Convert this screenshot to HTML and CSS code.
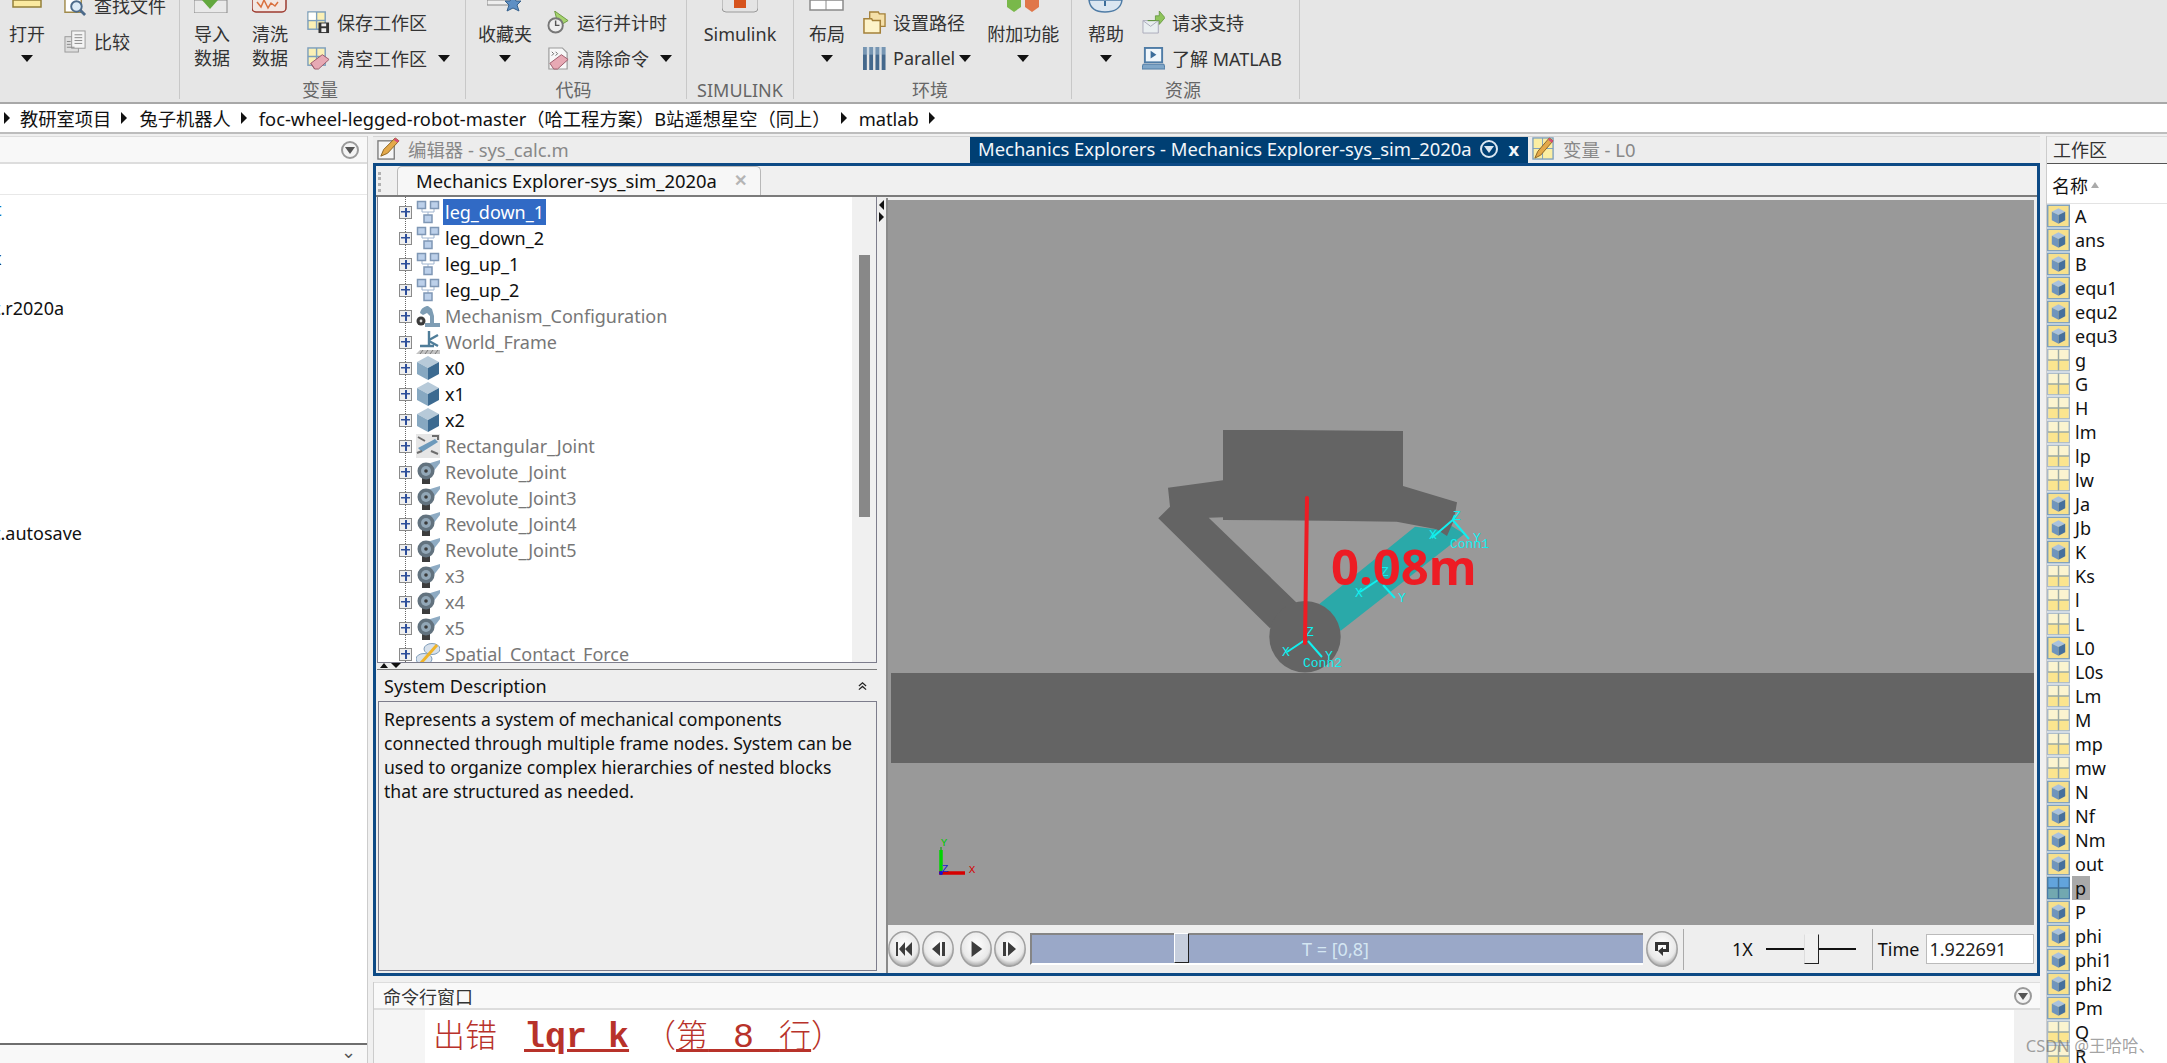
FILE: index.html
```html
<!DOCTYPE html>
<html lang="zh">
<head>
<meta charset="utf-8">
<title>MATLAB Mechanics Explorer</title>
<link rel="stylesheet" href="styles.css">
</head>
<body>
<svg class="defs" width="0" height="0">
  <defs>
    <symbol id="i-nodes" viewBox="0 0 24 24">
      <path d="M6 8v4h12V8M12 12v4" fill="none" stroke="#9fb4cf" stroke-width="1"/>
      <rect x="1.500" y="1.500" width="8" height="7" fill="#bcd0ea" stroke="#7f97b5" stroke-width="1.500"/>
      <rect x="14.500" y="1.500" width="8" height="7" fill="#bcd0ea" stroke="#7f97b5" stroke-width="1.500"/>
      <rect x="8" y="15" width="8" height="7.500" fill="#bcd0ea" stroke="#7f97b5" stroke-width="1.500"/>
    </symbol>
    <symbol id="i-robot" viewBox="0 0 24 24">
      <path d="M4 9c1-5 5-7 8-7l4 3 2 7v7h6v4H9v-4h5v-7l-3-3-4 2z" fill="#7e9db4"/>
      <circle cx="5" cy="17" r="4.500" fill="#3b3b3b"/><circle cx="5" cy="17" r="1.400" fill="#ddd"/>
    </symbol>
    <symbol id="i-world" viewBox="0 0 24 24">
      <path d="M13 1v14M13 10l9-5M13 11l9 5M4 16h14" fill="none" stroke="#4f7d99" stroke-width="2.400"/>
      <path d="M0 24l4-4h20v4z" fill="#c3c3c3"/>
      <path d="M4 24l3-4M9 24l3-4M14 24l3-4M19 24l3-4" stroke="#777" stroke-width="1"/>
    </symbol>
    <symbol id="i-cube" viewBox="0 0 24 24">
      <path d="M12 0l11 6-11 6L1 6z" fill="#b7cad9"/>
      <path d="M1 6l11 6v12L1 18z" fill="#87a8c1"/>
      <path d="M23 6v12l-11 6V12z" fill="#3c6a90"/>
    </symbol>
    <symbol id="i-rect" viewBox="0 0 24 24">
      <rect y="0" width="24" height="24" fill="#e6e6e6"/>
      <path d="M2 14L19 5l3 3L6 18z" fill="#6d9abb"/>
      <path d="M2 3l7 4M22 20l-7-3M1 19l5-2M16 2h6v4" fill="none" stroke="#6d6d6d" stroke-width="2"/>
    </symbol>
    <symbol id="i-rev" viewBox="0 0 24 24">
      <path d="M11 4L24 0v3l-7 9z" fill="#8eabc3"/>
      <path d="M6 17h8v7H6z" fill="#3d3d3d"/>
      <circle cx="10" cy="11" r="8.500" fill="#62727e"/>
      <circle cx="10" cy="11" r="5" fill="#92a7b7"/>
      <circle cx="10" cy="11" r="1.800" fill="#3a3a3a"/>
    </symbol>
    <symbol id="i-force" viewBox="0 0 24 24">
      <ellipse cx="16" cy="7" rx="8" ry="5.500" fill="#d7e1ec" stroke="#7f9cb8"/>
      <ellipse cx="8" cy="17" rx="8" ry="5.500" fill="#d7e1ec" stroke="#7f9cb8"/>
      <path d="M5 21L21 3" stroke="#f0b429" stroke-width="3"/>
    </symbol>
    <symbol id="i-wcube" viewBox="0 0 24 24">
      <rect x=".75" y=".75" width="22.500" height="22.500" fill="#f6e08c" stroke="#7d9fbd" stroke-width="1.500"/>
      <path d="M12 4l7 3.500-7 3.500-7-3.500z" fill="#a9c2de"/>
      <path d="M5 7.500l7 3.500v9l-7-3.500z" fill="#6f95bd"/>
      <path d="M19 7.500v9l-7 3.500v-9z" fill="#46709c"/>
    </symbol>
    <symbol id="i-wgrid" viewBox="0 0 24 24">
      <rect x=".75" y=".75" width="22.500" height="22.500" fill="#fbf4d0" stroke="#a9b9c9" stroke-width="1.500"/>
      <rect x="1.500" y="12" width="21" height="10.500" fill="#fbe58f"/>
      <path d="M12 1v22M1 12h22" stroke="#9aa9a4" stroke-width="1.500"/>
    </symbol>
    <symbol id="i-wgridsel" viewBox="0 0 24 24">
      <rect x=".75" y=".75" width="22.500" height="22.500" fill="#62a4dc" stroke="#4b7da6" stroke-width="1.500"/>
      <rect x="1.500" y="12" width="21" height="10.500" fill="#72a8b0"/>
      <path d="M12 1v22M1 12h22" stroke="#3e6e94" stroke-width="1.500"/>
    </symbol>
    <symbol id="i-save" viewBox="0 0 24 24">
      <rect x="1" y="1" width="18" height="18" fill="#fbf0b5" stroke="#7d9fbd" stroke-width="1.500"/>
      <path d="M10 1v18M1 10h18" stroke="#7d9fbd" stroke-width="1.500"/>
      <rect x="1.700" y="1.700" width="7.500" height="7.500" fill="#fff"/>
      <rect x="12" y="12" width="11" height="11" fill="#333"/><rect x="15" y="13" width="5" height="3" fill="#eee"/><rect x="15" y="18" width="5" height="4" fill="#eee"/>
    </symbol>
    <symbol id="i-clear" viewBox="0 0 24 24">
      <rect x="1" y="1" width="18" height="18" fill="#fbf0b5" stroke="#7d9fbd" stroke-width="1.500"/>
      <path d="M10 1v18M1 10h18" stroke="#7d9fbd" stroke-width="1.500"/>
      <path d="M4 17l12-9 7 5-11 10H8z" fill="#e7a9b4" stroke="#9b5a6a"/>
      <path d="M4 17l4 6" stroke="#9b5a6a"/>
    </symbol>
    <symbol id="i-find" viewBox="0 0 24 24">
      <path d="M1 4h17v15H1z" fill="#fff" stroke="#a08a4a" stroke-width="1.500"/>
      <circle cx="13" cy="13" r="5.500" fill="#dceaf6" stroke="#4c6a8a" stroke-width="2"/>
      <path d="M17 17l5 5" stroke="#4c6a8a" stroke-width="3"/>
    </symbol>
    <symbol id="i-compare" viewBox="0 0 24 24">
      <rect x="1" y="7" width="14" height="16" fill="#ddd" stroke="#999"/>
      <rect x="8" y="1" width="14" height="18" fill="#f4f4f4" stroke="#999"/>
      <path d="M11 5h8M11 8h8M11 11h8M11 14h8M3 12h4M3 15h4M3 18h8" stroke="#888"/>
    </symbol>
    <symbol id="i-run" viewBox="0 0 24 24">
      <path d="M8 0l14 10-10 6z" fill="#a6d36f" stroke="#6c9a40"/>
      <circle cx="9" cy="15" r="7.500" fill="#eee" stroke="#777" stroke-width="2"/>
      <path d="M9 10v5h4" stroke="#555" stroke-width="1.500" fill="none"/>
    </symbol>
    <symbol id="i-clrcmd" viewBox="0 0 24 24">
      <path d="M2 1h14l5 5v17H2z" fill="#f8f8f8" stroke="#999" stroke-width="1.200"/>
      <path d="M5 5l2 2-2 2M9 5l2 2-2 2" stroke="#666" fill="none"/>
      <path d="M3 17l12-9 7 5-11 10H7z" fill="#e7a9b4" stroke="#9b5a6a"/>
    </symbol>
    <symbol id="i-folder" viewBox="0 0 24 24">
      <path d="M7 1h9l1 2h6v13H7z" fill="#f4dfa8" stroke="#a4813a" stroke-width="1.400"/>
      <path d="M1 8h8l1 2h8v13H1z" fill="#fdf3ca" stroke="#a4813a" stroke-width="1.600"/>
    </symbol>
    <symbol id="i-par" viewBox="0 0 24 24">
      <g fill="#44688c"><rect x="0" width="4" height="24"/><rect x="6.500" width="4" height="24"/><rect x="13" width="4" height="24"/><rect x="19.500" width="4" height="24"/></g>
      <rect width="24" height="8" fill="#b4cde0" opacity=".45"/>
    </symbol>
    <symbol id="i-support" viewBox="0 0 24 24">
      <path d="M1 10h16v13H1z" fill="#e9eef0" stroke="#aab"/>
      <path d="M1 10l8 6 8-6" fill="none" stroke="#aab"/>
      <path d="M6 10h8V5h4V0l6 7-6 7V10H6z" fill="#8fc45b" stroke="#5e933a" stroke-width=".8"/>
    </symbol>
    <symbol id="i-learn" viewBox="0 0 24 24">
      <rect x="3" y="1" width="18" height="15" fill="#f0f6fb" stroke="#4f7ca6" stroke-width="2"/>
      <path d="M9 4l6 4-6 4z" fill="#3b6d9b"/>
      <path d="M1 18h22l1 5H0z" fill="#7fa6c8" stroke="#4f7ca6"/>
    </symbol>
    <symbol id="i-pen" viewBox="0 0 24 24">
      <rect x="1" y="4" width="17" height="19" fill="#f6f6f6" stroke="#7a7a7a" stroke-width="1.400"/>
      <path d="M4 20l3-7L19 1l4 3L11 17z" fill="#e4a94a" stroke="#8b6320"/>
      <path d="M19 1l4 3-1.500 2-4-3z" fill="#d64b7a"/>
    </symbol>
    <symbol id="i-varpen" viewBox="0 0 24 24">
      <rect x="1" y="1" width="21" height="22" fill="#fbeea3" stroke="#7d9fbd" stroke-width="1.400"/>
      <path d="M11 1v22M1 12h21" stroke="#7d9fbd"/>
      <path d="M3 22l3-7L18 1l4 3L9 19z" fill="#e4a94a" stroke="#8b6320"/>
      <path d="M18 1l4 3-1 2-4-3z" fill="#d64b7a"/>
    </symbol>
    <radialGradient id="g-btn" cx=".5" cy=".4" r=".62">
      <stop offset="0" stop-color="#fff"/><stop offset=".72" stop-color="#e9e9e9"/><stop offset="1" stop-color="#9b9b9b"/>
    </radialGradient>
    <symbol id="i-round" viewBox="0 0 32 36">
      <ellipse cx="16" cy="18" rx="15.200" ry="17.200" fill="url(#g-btn)" stroke="#a0a0a0" stroke-width="1.500"/>
    </symbol>
  </defs>
</svg>

<div class="app">
  <header class="ribbon">
    <section class="group g-file">
      <div class="group-body">
        <div class="big w54">
          <svg class="big-icon" viewBox="0 0 36 13"><path d="M4 0h28v7H4z" fill="#fbeaa0" stroke="#94803a" stroke-width="1.500"/></svg>
          <span class="big-text">打开</span><i class="caret"></i>
        </div>
        <div class="smalls up ml10">
          <div class="small"><svg class="ico"><use href="#i-find"/></svg><span>查找文件</span></div>
          <div class="small"><svg class="ico"><use href="#i-compare"/></svg><span>比较</span></div>
        </div>
      </div>
    </section>

    <section class="group g-var">
      <div class="group-body">
        <div class="big w58 ml3">
          <svg class="big-icon" viewBox="0 0 36 13"><path d="M0 0h33v13H0z" fill="#e9e9e9" stroke="#888"/><path d="M8 0h16l-8 9z" fill="#63a83f"/></svg>
          <span class="big-text">导入</span><span class="big-text">数据</span>
        </div>
        <div class="big w58">
          <svg class="big-icon" viewBox="0 0 36 13"><rect x="0" y="-8" width="34" height="20" rx="4" fill="#f2e7e3" stroke="#9d3b30" stroke-width="1.500"/><path d="M5 2l4 5 3-7 4 8 3-5 4 3 3-4" fill="none" stroke="#d9703f" stroke-width="1.500"/></svg>
          <span class="big-text">清洗</span><span class="big-text">数据</span>
        </div>
        <div class="smalls ml8">
          <div class="small"><svg class="ico"><use href="#i-save"/></svg><span>保存工作区</span></div>
          <div class="small"><svg class="ico"><use href="#i-clear"/></svg><span>清空工作区</span><i class="caret side"></i></div>
        </div>
      </div>
      <div class="group-label">变量</div>
    </section>

    <section class="group g-code">
      <div class="group-body">
        <div class="big w60 ml9">
          <svg class="big-icon" viewBox="0 0 36 13"><path d="M0 0h26v5H0z" fill="#eee" stroke="#888"/><path d="M26 -4l3 5h5l-4 4 2 6-6-3-6 3 2-6-4-4h5z" fill="#5d8fc4" stroke="#35608c"/></svg>
          <span class="big-text">收藏夹</span><i class="caret"></i>
        </div>
        <div class="smalls ml12">
          <div class="small"><svg class="ico"><use href="#i-run"/></svg><span>运行并计时</span></div>
          <div class="small"><svg class="ico"><use href="#i-clrcmd"/></svg><span>清除命令</span><i class="caret side"></i></div>
        </div>
      </div>
      <div class="group-label">代码</div>
    </section>

    <section class="group g-sim">
      <div class="group-body">
        <div class="big full">
          <svg class="big-icon" viewBox="0 0 36 13"><rect x="0" y="-10" width="36" height="22" rx="4" fill="#e4e4e4" stroke="#9a9a9a"/><rect x="12" y="-6" width="12" height="14" fill="#d6531d"/></svg>
          <span class="big-text">Simulink</span>
        </div>
      </div>
      <div class="group-label plain">SIMULINK</div>
    </section>

    <section class="group g-env">
      <div class="group-body">
        <div class="big w64">
          <svg class="big-icon" viewBox="0 0 36 13"><path d="M1 0h33v10H1z" fill="#fff" stroke="#8a8a8a" stroke-width="1.500"/><path d="M17 0v10" stroke="#8a8a8a"/></svg>
          <span class="big-text">布局</span><i class="caret"></i>
        </div>
        <div class="smalls ml3">
          <div class="small"><svg class="ico"><use href="#i-folder"/></svg><span>设置路径</span></div>
          <div class="small"><svg class="ico"><use href="#i-par"/></svg><span>Parallel</span><i class="caret tight"></i></div>
        </div>
        <div class="big w80 ml12">
          <svg class="big-icon" viewBox="0 0 36 13"><path d="M2 0h14v7l-7 5-7-5z" fill="#79b84a"/><path d="M20 0h14v7l-7 5-7-5z" fill="#e0774a"/></svg>
          <span class="big-text">附加功能</span><i class="caret"></i>
        </div>
      </div>
      <div class="group-label">环境</div>
    </section>

    <section class="group g-res">
      <div class="group-body">
        <div class="big w66">
          <svg class="big-icon" viewBox="0 0 36 13"><path d="M1 0c1 9 8 12 16 12s16-3 17-12z" fill="#dbe6f1" stroke="#4f7ca6" stroke-width="1.500"/><path d="M17 1v5" stroke="#3b6d9b" stroke-width="2"/></svg>
          <span class="big-text">帮助</span><i class="caret"></i>
        </div>
        <div class="smalls ml2">
          <div class="small"><svg class="ico"><use href="#i-support"/></svg><span>请求支持</span></div>
          <div class="small"><svg class="ico"><use href="#i-learn"/></svg><span>了解 MATLAB</span></div>
        </div>
      </div>
      <div class="group-label">资源</div>
    </section>
  </header>

  <nav class="crumbs">
    <i class="tri"></i><span>教研室项目</span><i class="tri"></i><span>兔子机器人</span><i class="tri"></i><span>foc-wheel-legged-robot-master（哈工程方案）B站遥想星空（同上）</span><i class="tri"></i><span>matlab</span><i class="tri"></i>
  </nav>

  <main class="main">
    <aside class="files">
      <div class="panel-head"><span class="menu-dot"></span></div>
      <div class="files-path"></div>
      <div class="files-list">
        <div class="file blue">t</div>
        <div class="file">x</div>
        <div class="file">t.r2020a</div>
        <div class="file">t.autosave</div>
      </div>
      <div class="files-foot"><span class="chev">⌄</span></div>
    </aside>

    <div class="center">
      <div class="doc-tabs">
        <div class="doc-tab first"><svg class="ico"><use href="#i-pen"/></svg><span>编辑器 - sys_calc.m</span></div>
        <div class="doc-tab active"><span>Mechanics Explorers - Mechanics Explorer-sys_sim_2020a</span><span class="menu-dot light"></span><span class="close">x</span></div>
        <div class="doc-tab"><svg class="ico"><use href="#i-varpen"/></svg><span>变量 - L0</span></div>
      </div>

      <div class="frame">
        <div class="sub-tabs">
          <span class="grip"></span>
          <div class="sub-tab"><span>Mechanics Explorer-sys_sim_2020a</span><span class="sub-x">✕</span></div>
        </div>
        <div class="workspace">
          <div class="left-col">
            <div class="tree">
              <div class="tree-rows">
                <div class="row"><b class="plus"></b><svg class="ti"><use href="#i-nodes"/></svg><span class="sel">leg_down_1</span></div>
                <div class="row"><b class="plus"></b><svg class="ti"><use href="#i-nodes"/></svg><span>leg_down_2</span></div>
                <div class="row"><b class="plus"></b><svg class="ti"><use href="#i-nodes"/></svg><span>leg_up_1</span></div>
                <div class="row"><b class="plus"></b><svg class="ti"><use href="#i-nodes"/></svg><span>leg_up_2</span></div>
                <div class="row dim"><b class="plus"></b><svg class="ti"><use href="#i-robot"/></svg><span>Mechanism_Configuration</span></div>
                <div class="row dim"><b class="plus"></b><svg class="ti"><use href="#i-world"/></svg><span>World_Frame</span></div>
                <div class="row"><b class="plus"></b><svg class="ti"><use href="#i-cube"/></svg><span>x0</span></div>
                <div class="row"><b class="plus"></b><svg class="ti"><use href="#i-cube"/></svg><span>x1</span></div>
                <div class="row"><b class="plus"></b><svg class="ti"><use href="#i-cube"/></svg><span>x2</span></div>
                <div class="row dim"><b class="plus"></b><svg class="ti"><use href="#i-rect"/></svg><span>Rectangular_Joint</span></div>
                <div class="row dim"><b class="plus"></b><svg class="ti"><use href="#i-rev"/></svg><span>Revolute_Joint</span></div>
                <div class="row dim"><b class="plus"></b><svg class="ti"><use href="#i-rev"/></svg><span>Revolute_Joint3</span></div>
                <div class="row dim"><b class="plus"></b><svg class="ti"><use href="#i-rev"/></svg><span>Revolute_Joint4</span></div>
                <div class="row dim"><b class="plus"></b><svg class="ti"><use href="#i-rev"/></svg><span>Revolute_Joint5</span></div>
                <div class="row dim"><b class="plus"></b><svg class="ti"><use href="#i-rev"/></svg><span>x3</span></div>
                <div class="row dim"><b class="plus"></b><svg class="ti"><use href="#i-rev"/></svg><span>x4</span></div>
                <div class="row dim"><b class="plus"></b><svg class="ti"><use href="#i-rev"/></svg><span>x5</span></div>
                <div class="row dim"><b class="plus"></b><svg class="ti"><use href="#i-force"/></svg><span>Spatial_Contact_Force</span></div>
              </div>
              <div class="tree-scroll"><div class="tree-thumb"></div></div>
            </div>
            <div class="h-split"><i class="up-tri"></i><i class="down-tri"></i></div>
            <div class="desc-head"><span>System Description</span><svg class="dbl" viewBox="0 0 10 10"><path d="M1 5l4-3.500L9 5M1 9l4-3.500L9 9" fill="none" stroke="#222" stroke-width="1.400"/></svg></div>
            <div class="desc">Represents a system of mechanical components<br>connected through multiple frame nodes. System can be<br>used to organize complex hierarchies of nested blocks<br>that are structured as needed.</div>
          </div>

          <div class="v-split"><i class="left-tri"></i><i class="right-tri"></i></div>

          <div class="viewer">
            <svg class="scene" viewBox="888 200 1146 725" width="1146" height="725">
              <rect x="888" y="200" width="1146" height="725" fill="#999"/>
              <rect x="891" y="673" width="1143" height="90" fill="#646464"/>
              <path d="M1319.300 604L1415 526.700 1436.700 529.300 1450 525 1464.300 534 1340.700 630.700z" fill="#2aa9a9"/>
              <path d="M1223 430L1284.300 430 1403 431 1403 486 1457 502.300 1454 520 1447 536 1436.700 529.300 1396.700 521.700 1326.700 520.700 1223 520 1223 517.300 1208.700 517.700 1296.700 602.700 1270 628.300 1158.300 518.300 1170 506.700 1168 487.700 1223 480.300z" fill="#646464"/>
              <circle cx="1305" cy="636.700" r="35.700" fill="#646464"/>
              <g stroke="#10f0f0" stroke-width="2" fill="none">
                <path d="M1452.700 520L1431.700 538M1452.700 520L1469 539M1452.700 520L1455 515"/>
                <path d="M1378 580L1360 592M1383 585L1395 598M1378 580L1383 575"/>
                <path d="M1305 640L1287 652M1308 641L1322 657M1305 640L1307 634"/>
              </g>
              <g class="frame-labels" text-anchor="middle">
                <text x="1433" y="539">X</text><text x="1457" y="520">Z</text><text x="1477" y="542">Y</text>
                <text x="1359" y="597">X</text><text x="1385" y="576">Z</text><text x="1402" y="602">Y</text>
                <text x="1286" y="656">X</text><text x="1310" y="636">Z</text><text x="1329" y="660">Y</text>
              </g>
              <g class="frame-labels">
                <text x="1450" y="548">Conn1</text><text x="1303" y="667">Conn2</text>
              </g>
              <path d="M1307 498L1305 643" stroke="#ed1c24" stroke-width="4" stroke-linecap="round"/>
              <text class="measure" x="1331" y="585">0.08m</text>
              <path d="M941 847v3" stroke="#00a000" stroke-width="1"/>
              <path d="M941 850v23" stroke="#00d400" stroke-width="3.500"/>
              <path d="M939 873h26" stroke="#d60000" stroke-width="3.500"/>
              <circle cx="941" cy="873" r="2" fill="#1414d0"/>
              <text class="axis y" x="944" y="846" text-anchor="middle">Y</text>
              <text class="axis x" x="972" y="873" text-anchor="middle">X</text>
              <text class="axis z" x="945" y="872" text-anchor="middle">Z</text>
            </svg>
            <div class="controls">
              <button class="rnd b1"><svg class="rnd-bg"><use href="#i-round"/></svg><svg class="glyph" viewBox="0 0 18 14"><path d="M1 0h2v14H1zM10 0v14L4 7zM17 0v14l-7-7z" fill="#3d3d3d"/></svg></button>
              <button class="rnd b2"><svg class="rnd-bg"><use href="#i-round"/></svg><svg class="glyph" viewBox="0 0 18 14"><path d="M11 0v14L3 7zM13 0h3v14h-3z" fill="#3d3d3d"/></svg></button>
              <button class="rnd b1"><svg class="rnd-bg"><use href="#i-round"/></svg><svg class="glyph" viewBox="0 0 18 18"><path d="M4 0v18l12-9z" fill="#3d3d3d"/></svg></button>
              <button class="rnd"><svg class="rnd-bg"><use href="#i-round"/></svg><svg class="glyph" viewBox="0 0 18 14"><path d="M2 0h3v14H2zM7 0v14l8-7z" fill="#3d3d3d"/></svg></button>
              <div class="track"><div class="track-thumb"></div><span class="track-label">T = [0,8]</span></div>
              <button class="rnd loop"><svg class="rnd-bg"><use href="#i-round"/></svg><svg class="glyph" viewBox="0 0 16 16"><path d="M1 1h14v10H9v4l-5-5 5-4v2h3V4H4v6H1z" fill="#333"/></svg></button>
              <span class="ctl-sep"></span>
              <span class="speed">1X</span>
              <div class="speed-slider"><i class="speed-thumb"></i></div>
              <span class="ctl-sep"></span>
              <span class="time-label">Time</span>
              <input class="time" value="1.922691" aria-label="Time">
            </div>
          </div>
        </div>
      </div>

      <div class="cmd">
        <div class="cmd-head"><span>命令行窗口</span><span class="menu-dot"></span></div>
        <div class="cmd-body">
          <div class="cmd-gutter"></div>
          <div class="cmd-text"><span class="cjk">出错</span><u class="fn">lqr_k</u><span class="cjk pre">（</span><u><span class="cjk">第</span><span class="wide"> 8 </span><span class="cjk">行</span></u><span class="cjk">）</span></div>
          <div class="cmd-scroll"></div>
        </div>
      </div>
    </div>

    <aside class="vars">
      <div class="vars-head">工作区</div>
      <div class="vars-col"><span>名称</span><i class="sort"></i></div>
      <ul class="vars-list">
        <li><svg class="vi"><use href="#i-wcube"/></svg>A</li>
        <li><svg class="vi"><use href="#i-wcube"/></svg>ans</li>
        <li><svg class="vi"><use href="#i-wcube"/></svg>B</li>
        <li><svg class="vi"><use href="#i-wcube"/></svg>equ1</li>
        <li><svg class="vi"><use href="#i-wcube"/></svg>equ2</li>
        <li><svg class="vi"><use href="#i-wcube"/></svg>equ3</li>
        <li><svg class="vi"><use href="#i-wgrid"/></svg>g</li>
        <li><svg class="vi"><use href="#i-wgrid"/></svg>G</li>
        <li><svg class="vi"><use href="#i-wgrid"/></svg>H</li>
        <li><svg class="vi"><use href="#i-wgrid"/></svg>lm</li>
        <li><svg class="vi"><use href="#i-wgrid"/></svg>lp</li>
        <li><svg class="vi"><use href="#i-wgrid"/></svg>lw</li>
        <li><svg class="vi"><use href="#i-wcube"/></svg>Ja</li>
        <li><svg class="vi"><use href="#i-wcube"/></svg>Jb</li>
        <li><svg class="vi"><use href="#i-wcube"/></svg>K</li>
        <li><svg class="vi"><use href="#i-wgrid"/></svg>Ks</li>
        <li><svg class="vi"><use href="#i-wgrid"/></svg>l</li>
        <li><svg class="vi"><use href="#i-wgrid"/></svg>L</li>
        <li><svg class="vi"><use href="#i-wcube"/></svg>L0</li>
        <li><svg class="vi"><use href="#i-wgrid"/></svg>L0s</li>
        <li><svg class="vi"><use href="#i-wgrid"/></svg>Lm</li>
        <li><svg class="vi"><use href="#i-wgrid"/></svg>M</li>
        <li><svg class="vi"><use href="#i-wgrid"/></svg>mp</li>
        <li><svg class="vi"><use href="#i-wgrid"/></svg>mw</li>
        <li><svg class="vi"><use href="#i-wcube"/></svg>N</li>
        <li><svg class="vi"><use href="#i-wcube"/></svg>Nf</li>
        <li><svg class="vi"><use href="#i-wcube"/></svg>Nm</li>
        <li><svg class="vi"><use href="#i-wcube"/></svg>out</li>
        <li><svg class="vi"><use href="#i-wgridsel"/></svg><span class="var-sel">p</span></li>
        <li><svg class="vi"><use href="#i-wcube"/></svg>P</li>
        <li><svg class="vi"><use href="#i-wcube"/></svg>phi</li>
        <li><svg class="vi"><use href="#i-wcube"/></svg>phi1</li>
        <li><svg class="vi"><use href="#i-wcube"/></svg>phi2</li>
        <li><svg class="vi"><use href="#i-wcube"/></svg>Pm</li>
        <li><svg class="vi"><use href="#i-wgrid"/></svg>Q</li>
        <li><svg class="vi"><use href="#i-wgrid"/></svg>R</li>
      </ul>
    </aside>
  </main>
  <div class="watermark">CSDN @王哈哈、</div>
</div>
</body>
</html>
```

FILE: styles.css
```css
* { box-sizing: border-box; }
html, body { margin: 0; padding: 0; }
body {
  background: #f0f0f0;
  font-family: "Noto Sans", "Noto Sans CJK SC", sans-serif;
  color: #111;
}
.defs { position: absolute; }
.app { position: relative; width: 2167px; height: 1063px; overflow: hidden; display: flex; flex-direction: column; }

/* ribbon */
.ribbon {
  height: 104px; flex: none; display: flex;
  background: #e6e6e6;
  border-bottom: 2px solid #a8a8a8;
  padding-bottom: 3px;
}
.group { flex: none; display: flex; flex-direction: column; border-right: 1px solid #c8c8c8; overflow: hidden; }
.g-file { width: 180px; }
.g-var { width: 286px; }
.g-code { width: 221px; }
.g-sim { width: 107px; }
.g-env { width: 278px; }
.g-res { width: 228px; }
.group-body { height: 80px; display: flex; flex: none; }
.group-label { height: 19px; line-height: 20px; text-align: center; font-size: 18px; color: #666; padding-right: 5px; }
.group-label.plain { padding-right: 0; }
.big { display: flex; flex-direction: column; align-items: center; flex: none; font-size: 18px; color: #333; }
.big-icon { width: 36px; height: 13px; flex: none; margin-bottom: 9px; }
.big-text { height: 24px; line-height: 24px; white-space: nowrap; }
.caret { width: 0; height: 0; border-left: 6px solid transparent; border-right: 6px solid transparent; border-top: 7px solid #111; margin-top: 9px; flex: none; }
.caret.side { margin: 0 0 0 4px; }
.caret.tight { margin: 0 0 0 -3px; }
.w54 { width: 54px; } .w58 { width: 58px; } .w60 { width: 60px; } .w64 { width: 66px; } .w66 { width: 68px; } .w80 { width: 80px; }
.ml2 { margin-left: 2px; } .ml3 { margin-left: 3px; } .ml8 { margin-left: 8px; } .ml9 { margin-left: 9px; } .ml10 { margin-left: 10px; } .ml12 { margin-left: 12px; }
.full { width: 100%; }
.smalls { display: flex; flex-direction: column; flex: none; padding-top: 4px; }
.smalls.up { padding-top: 0; margin-top: -13px; }
.small { height: 36px; display: flex; align-items: center; gap: 7px; font-size: 18px; color: #333; white-space: nowrap; }
.ico { width: 23px; height: 23px; flex: none; }

/* address */
.crumbs { height: 30px; flex: none; background: #fff; border-bottom: 2px solid #bdbdbd; display: flex; align-items: center; font-size: 18.300px; color: #111; padding-left: 1px; white-space: nowrap; }
.tri { width: 0; height: 0; border-top: 6px solid transparent; border-bottom: 6px solid transparent; border-left: 6px solid #111; margin: 0 12px 0 3px; flex: none; }
.tri:first-child { margin-right: 10px; }
.crumbs span + .tri { margin-left: 10px; }

/* main */
.main { flex: 1; display: flex; min-height: 0; background: #f0f0f0; padding-top: 2px; }
.files { width: 368px; flex: none; display: flex; flex-direction: column; background: #fff; border-right: 1px solid #ccc; }
.panel-head { height: 28px; flex: none; background: #f8f8f8; border-bottom: 2px solid #ddd; border-top: 1px solid #ddd; display: flex; align-items: center; justify-content: flex-end; padding-right: 8px; }
.menu-dot { width: 18px; height: 18px; flex: none; border: 2px solid #9a9a9a; border-radius: 50%; background: #f4f4f4; display: flex; align-items: center; justify-content: center; }
.menu-dot::after { content: ""; border-left: 5px solid transparent; border-right: 5px solid transparent; border-top: 7px solid #555; margin-top: 2px; }
.menu-dot.light { background: #003f73; border-color: #dbe7f2; }
.menu-dot.light::after { border-top-color: #dbe7f2; }
.files-path { height: 31px; flex: none; border-bottom: 1px solid #e8e8e8; }
.files-list { flex: 1; position: relative; font-size: 18px; overflow: hidden; }
.file { position: absolute; white-space: nowrap; }
.file:nth-child(1) { left: -5px; top: 2px; }
.file.blue { color: #0a6fb8; }
.file:nth-child(2) { left: -8px; top: 51px; }
.file:nth-child(3) { left: -6px; top: 101px; }
.file:nth-child(4) { left: -6px; top: 326px; }
.files-foot { height: 20px; flex: none; background: #f8f8f8; border-top: 2px solid #6e6e6e; display: flex; justify-content: flex-end; padding-right: 11px; color: #555; font-size: 18px; line-height: 12px; }

.center { width: 1667px; flex: none; margin-left: 5px; display: flex; flex-direction: column; }
.doc-tabs { height: 27px; flex: none; display: flex; background: #ededed; font-size: 18.400px; color: #888; border-top: 1px solid #d4d4d4; }
.doc-tab { display: flex; align-items: center; gap: 8px; padding-left: 4px; padding-bottom: 3px; white-space: nowrap; flex: none; }
.doc-tab.first { width: 597px; }
.doc-tab.active { width: 558px; background: #003f73; color: #f2f6fa; padding-left: 8px; }
.doc-tab.active .close { margin-left: 3px; font-weight: 700; }

.frame { height: 813px; flex: none; border: 3px solid #0d4a85; background: #eee; display: flex; flex-direction: column; }
.sub-tabs { height: 31px; flex: none; display: flex; border-bottom: 2px solid #7b7b7b; background: #f0f0f0; }
.grip { width: 4px; height: 20px; margin: 6px 0 0 2px; border-left: 3px dotted #b0b0b0; }
.sub-tab { margin-left: 15px; width: 364px; background: #f7f7f7; border: 1px solid #b8b8b8; border-bottom: 0; border-radius: 5px 5px 0 0; display: flex; align-items: center; padding: 0 0 2px 18px; font-size: 18.400px; color: #111; white-space: nowrap; }
.sub-x { margin-left: 17px; color: #b5b5b5; font-size: 16px; font-weight: 700; }

.workspace { flex: 1; display: flex; min-height: 0; }
.left-col { width: 501px; flex: none; display: flex; flex-direction: column; padding-left: 1px; }
.tree { height: 466px; flex: none; background: #fff; border: 1px solid #7d7d8c; border-top: 0; display: flex; position: relative; overflow: hidden; }
.tree::before { content: ""; position: absolute; left: 27px; top: 0; bottom: 0; border-left: 1px dotted #666; }
.tree-rows { flex: 1; padding-top: 2px; }
.row { height: 26px; display: flex; align-items: center; font-size: 18px; line-height: 26px; color: #111; white-space: nowrap; position: relative; }
.row.dim { color: #777; }
.plus { width: 13px; height: 13px; margin-left: 21px; flex: none; background: #efefef linear-gradient(#2f4f9a, #2f4f9a) center / 9px 1.500px no-repeat; border: 1px solid #8a8a8a; position: relative; }
.plus::after { content: ""; position: absolute; left: 5px; top: 1px; width: 1.500px; height: 9px; background: #2f4f9a; }
.ti { width: 24px; height: 24px; flex: none; margin-left: 4px; margin-right: 5px; }
.sel { background: #316ac5; color: #fff; padding: 0 2px; margin-left: -2px; }
.tree-scroll { width: 24px; flex: none; background: #f0f0f0; padding: 58px 6px 0 7px; }
.tree-thumb { height: 262px; background: #888; }
.h-split { height: 7px; flex: none; display: flex; gap: 3px; padding-left: 3px; border-bottom: 1px solid #7d7d7d; align-items: flex-start; }
.up-tri { width: 0; height: 0; border-left: 4px solid transparent; border-right: 4px solid transparent; border-bottom: 5px solid #111; }
.down-tri { width: 0; height: 0; border-left: 5px solid transparent; border-right: 5px solid transparent; border-top: 5px solid #111; }
.desc-head { height: 31px; flex: none; display: flex; justify-content: space-between; align-items: center; padding: 0 10px 0 7px; font-size: 18px; }
.dbl { width: 9px; height: 10px; flex: none; }
.desc { flex: 1; border: 1px solid #7d7d8c; padding: 5px 5px; font-size: 17.600px; line-height: 24px; background: #eee; margin: 0 0 2px 1px; white-space: nowrap; overflow: hidden; }
.v-split { width: 9px; flex: none; display: flex; flex-direction: column; padding: 3px 0 0 2px; gap: 2px; }
.left-tri { width: 0; height: 0; border-top: 5px solid transparent; border-bottom: 5px solid transparent; border-right: 5px solid #111; }
.right-tri { width: 0; height: 0; border-top: 5px solid transparent; border-bottom: 5px solid transparent; border-left: 5px solid #111; }
.viewer { flex: 1; min-width: 0; display: flex; flex-direction: column; margin-top: 1px; border-left: 2px solid #8a8a8a; }
.scene { display: block; flex: none; margin-top: 2px; }
.frame-labels text { fill: #10f0f0; font-family: "Liberation Mono", monospace; font-size: 13px; }
.measure { fill: #ed1c24; font-family: "Noto Sans", sans-serif; font-weight: 700; font-size: 49px; }
.axis { font-family: "Liberation Mono", monospace; font-size: 11px; }
.axis.y { fill: #00c800; } .axis.x { fill: #d60000; } .axis.z { fill: #2020d0; }
.controls { flex: 1; display: flex; align-items: center; min-height: 0; }
.rnd { width: 32px; height: 36px; flex: none; padding: 0; margin: 0; border: 0; background: none; position: relative; }
.b1 { margin-right: 2px; }
.b2 { margin-right: 6px; }
.rnd-bg { width: 32px; height: 36px; display: block; }
.glyph { position: absolute; left: 7px; top: 10px; width: 18px; height: 16px; }
.track { width: 613px; height: 32px; flex: none; margin-left: 4px; background: #9aa8c8; border-top: 2px solid #858585; border-left: 2px solid #858585; border-bottom: 2px solid #fff; display: flex; position: relative; align-items: center; justify-content: center; }
.track-thumb { position: absolute; left: 142px; top: -2px; width: 15px; height: 30px; background: #c6cedd; border: 1px solid #222; border-top-color: #fff; border-left-color: #fff; }
.track-label { color: #d4e6f2; font-size: 18px; margin-left: -4px; }
.loop { margin-left: 3px; }
.ctl-sep { width: 1px; height: 41px; background: #aaa; flex: none; margin-left: 5px; }
.speed { margin-left: 48px; font-size: 18px; }
.speed-slider { width: 90px; height: 2px; background: #111; margin-left: 13px; position: relative; flex: none; }
.speed-thumb { position: absolute; left: 38px; top: -14px; width: 15px; height: 30px; background: #f0f0f0; border: 1px solid #222; border-top-color: #f0f0f0; border-left-color: #ddd; }
.speed-slider + .ctl-sep { margin-left: 16px; }
.time-label { margin-left: 5px; font-size: 18px; }
.time { width: 108px; height: 30px; flex: none; margin-left: 6px; font: 18px "Noto Sans", sans-serif; border: 1px solid #bbb; padding: 0 3px; color: #222; background: #fff; }

.cmd { flex: 1; min-height: 0; margin-top: 6px; display: flex; flex-direction: column; border-left: 1px solid #ccc; background: #fff; }
.cmd-head { height: 28px; flex: none; background: #f9f9f9; border-top: 1px solid #ddd; border-bottom: 2px solid #ddd; display: flex; align-items: center; justify-content: space-between; padding: 0 8px 0 9px; font-size: 18px; color: #333; }
.cmd-body { flex: 1; display: flex; min-height: 0; overflow: hidden; }
.cmd-gutter { width: 51px; flex: none; background: #f5f5f5; }
.cmd-text { flex: 1; padding-left: 8px; color: #b8322a; white-space: nowrap; font-family: "Liberation Mono", "Noto Sans CJK SC", monospace; font-size: 35px; line-height: 46px; }
.cjk { font-family: "Noto Sans CJK SC", sans-serif; font-size: 32px; font-weight: 300; }
.fn { font-weight: 700; margin-left: 27px; }
.pre { margin-left: 15px; }
.wide { word-spacing: 4px; white-space: pre; }
.cmd-scroll { width: 26px; flex: none; background: #f0f0f0; }

.vars { flex: 1; min-width: 0; margin-left: 6px; display: flex; flex-direction: column; border-left: 1px solid #ccc; background: #fff; }
.vars-head { height: 28px; flex: none; background: #f2f2f2; font-size: 18px; line-height: 27px; color: #333; padding-left: 6px; border-top: 1px solid #ddd; border-bottom: 1px solid #555; }
.vars-col { height: 40px; flex: none; display: flex; align-items: center; font-size: 18px; padding: 3px 0 0 5px; border-bottom: 1px solid #e3e3e3; }
.sort { width: 0; height: 0; border-left: 4px solid transparent; border-right: 4px solid transparent; border-bottom: 6px solid #aaa; margin-left: 3px; }
.vars-list { list-style: none; margin: 0; padding: 0; overflow: hidden; flex: 1; }
.vars-list li { height: 24px; display: flex; align-items: center; font-size: 18px; line-height: 24px; color: #111; }
.vi { width: 23px; height: 24px; flex: none; margin: 0 5px 0 0; }
.var-sel { background: #a9a9a9; padding: 0 4px 0 3px; margin-left: -3px; }

.watermark { position: absolute; right: 12px; bottom: 6px; font-size: 16.500px; color: rgba(110,110,110,.65); white-space: nowrap; }
```
